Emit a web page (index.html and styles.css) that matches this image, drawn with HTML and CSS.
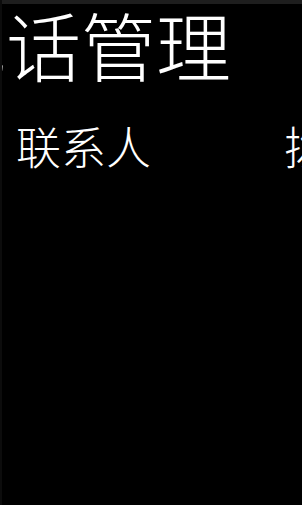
FILE: index.html
```html
<!DOCTYPE html>
<html>

<head>
    <title>电话管理</title>
    <link rel="stylesheet" href="styles.css">
</head>

<body>
    <div class="status-bar"></div>
    <div id="panorama">
        <h1 class="title">电话管理</h1>
        <div class="pivot-headers">
            <div class="pivot-item active">联系人</div>
            <div class="pivot-item">拨号</div>
        </div>
        <div class="pivot-content"></div>
    </div>
</body>

</html>
```

FILE: styles.css
```css
html, body {
    margin: 0;
    height: 100%;
    background-color: #000;
    overflow: hidden;
}

body {
    font-family: "Noto Sans CJK SC", "Noto Sans", sans-serif;
    color: #fff;
    display: flex;
    flex-direction: column;
    border-left: 2px solid #0c0c0c;
}

.status-bar {
    height: 4px;
    background-color: #1e1e1e;
    flex-shrink: 0;
}

#panorama {
    flex: 1;
    display: flex;
    flex-direction: column;
}

.title {
    margin: 0 0 0 -71px;
    font-size: 75px;
    font-weight: 300;
    line-height: 80px;
    white-space: nowrap;
}

.pivot-headers {
    display: flex;
    gap: 133px;
    padding-left: 14px;
    margin-top: 34px;
    white-space: nowrap;
}

.pivot-item {
    font-size: 45px;
    font-weight: 300;
    line-height: 56px;
}
```
